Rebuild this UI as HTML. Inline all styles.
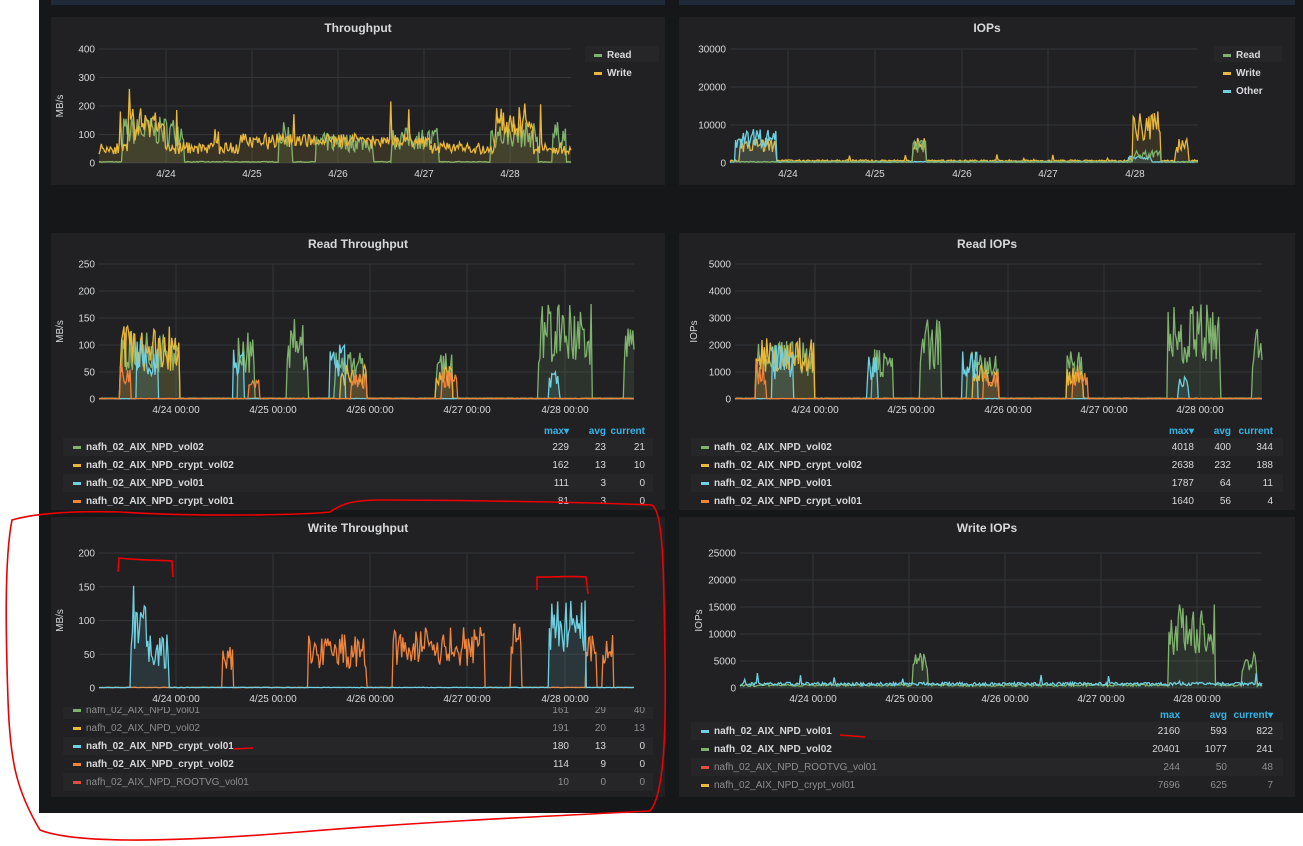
<!DOCTYPE html>
<html><head><meta charset="utf-8">
<style>
html,body{margin:0;padding:0;background:#fff;width:1303px;height:846px;overflow:hidden;font-family:"Liberation Sans",sans-serif}
#dash{position:absolute;left:39px;top:0;width:1264px;height:813px;background:#161719}
svg{position:absolute;left:0;top:0}
</style></head><body>
<div id="dash"></div>
<svg id="s" width="1303" height="846" style="z-index:2"></svg>
<script>
var S='';
function R(s){return function(){s=(s*16807)%2147483647;return s/2147483647}}
function rect(x,y,w,h,c){S+='<rect x="'+x+'" y="'+y+'" width="'+w+'" height="'+h+'" fill="'+c+'"/>'}
function txt(x,y,t,c,sz,anchor,w,extra){S+='<text x="'+x+'" y="'+y+'" fill="'+c+'" font-size="'+sz+'" text-anchor="'+(anchor||'start')+'" font-weight="'+(w||'normal')+'" font-family="Liberation Sans, sans-serif" '+(extra||'')+'>'+t+'</text>'}
rect(51,0,614,5,'#1f2a38');rect(679,0,616,5,'#1f2a38');
function panel(x,y,w,h,title){rect(x,y,w,h,'#212124');txt(x+w/2,y+15,title,'#d8d9da',12,'middle','bold')}
function xlabels(y1,xt,xl){for(var j=0;j<xt.length;j++)txt(xt[j],y1+14,xl[j],'#d8d9da',10,'middle')}
function grid(x0,y0,x1,y1,ylabels,xt,xl,unit){
 var n=ylabels.length-1;
 for(var i=0;i<=n;i++){var y=y1-(y1-y0)*i/n;S+='<line x1="'+x0+'" x2="'+x1+'" y1="'+y+'" y2="'+y+'" stroke="#333538"/>';txt(x0-4,y+3.5,ylabels[i],'#d8d9da',10,'end')}
 for(var j=0;j<xt.length;j++){S+='<line x1="'+xt[j]+'" x2="'+xt[j]+'" y1="'+y0+'" y2="'+y1+'" stroke="#333538"/>'}
 xlabels(y1,xt,xl);
 txt(0,0,unit,'#d8d9da',10,'middle','normal','transform="translate('+(x0-38+(unit=='IOPs'?0:2))+','+((y0+y1)/2)+') rotate(-90)"');
}
function series(x0,y0,x1,y1,n,base,bursts,seed,col,fill,spk){
 var r=R(seed),pts=[];
 for(var i=0;i<n;i++){var t=i/(n-1),v=base*(0.6+0.8*r());
  for(var k=0;k<bursts.length;k++){var b=bursts[k];if(t>=b[0]&&t<=b[1])v+=b[2]*(0.35+0.65*r())}
  if(spk&&r()<spk)v+=base*3*r();
  v=Math.max(0,Math.min(1,v));pts.push([x0+(x1-x0)*t,y1-(y1-y0)*v])}
 var d='M'+pts.map(function(p){return p[0].toFixed(1)+','+p[1].toFixed(1)}).join('L');
 if(fill)S+='<path d="'+d+'L'+x1+','+y1+'L'+x0+','+y1+'Z" fill="'+col+'" fill-opacity="0.12"/>';
 S+='<path d="'+d+'" fill="none" stroke="'+col+'" stroke-width="1.3"/>';
}
var G='#7eb26d',Y='#eab839',C='#6ed0e0',O='#ef843c',RD='#e24d42';
function leg(x,y,c,t,dim){rect(x,y-4,8,3,c);txt(x+13,y,t,dim?'#8e8e8e':'#d8d9da',10,'start',dim?'normal':'bold')}
function table(px,pw,hy,rows,hdr,cols){
 txt(cols[0],hy,hdr[0],'#33b5e5',10,'end','bold');txt(cols[1],hy,hdr[1],'#33b5e5',10,'end','bold');txt(cols[2],hy,hdr[2],'#33b5e5',10,'end','bold');
 for(var i=0;i<rows.length;i++){var y=hy+16+i*18,r=rows[i];
  if(i%2==0)rect(px+12,y-12,pw-24,18,'#262628');
  leg(px+22,y,r[0],r[1],r[5]);
  var c=r[5]?'#8e8e8e':'#d8d9da';txt(cols[0],y,r[2],c,10,'end');txt(cols[1],y,r[3],c,10,'end');txt(cols[2],y,r[4],c,10,'end')}
}
var XL=['4/24 00:00','4/25 00:00','4/26 00:00','4/27 00:00','4/28 00:00'];
panel(51,17,614,168,'Throughput');
grid(99,49,571,163,['0','100','200','300','400'],[166,252,338,424,510],['4/24','4/25','4/26','4/27','4/28'],'MB/s');
series(99,49,571,163,420,0.01,[[0.05,0.18,0.4],[0.38,0.41,0.35],[0.46,0.58,0.25],[0.62,0.72,0.3],[0.83,0.93,0.35],[0.96,0.99,0.35]],7,G,true);
series(99,49,571,163,420,0.13,[[0.06,0.14,0.3],[0.3,0.7,0.1],[0.84,0.92,0.35]],11,Y,true,0.04);
rect(585,46,74,16,'#262628');leg(594,58,G,'Read');leg(594,76,Y,'Write');
panel(679,17,616,168,'IOPs');
grid(730,49,1198,163,['0','10000','20000','30000'],[788,875,962,1048,1135],['4/24','4/25','4/26','4/27','4/28'],'');
series(730,49,1198,163,420,0.02,[[0.02,0.1,0.2],[0.39,0.42,0.2],[0.86,0.92,0.45],[0.95,0.98,0.2]],5,Y,true,0.03);
series(730,49,1198,163,420,0.01,[[0.01,0.1,0.3],[0.85,0.9,0.05]],9,C,true);
series(730,49,1198,163,420,0.01,[[0.39,0.42,0.2],[0.86,0.92,0.1]],13,G,false);
rect(1214,46,68,16,'#262628');leg(1223,58,G,'Read');leg(1223,76,Y,'Write');leg(1223,94,C,'Other');
panel(51,233,614,277,'Read Throughput');
grid(99,264,634,399,['0','50','100','150','200','250'],[176,273,370,467,565],XL,'MB/s');
series(99,264,634,399,450,0.005,[[0.04,0.15,0.5],[0.26,0.29,0.5],[0.35,0.39,0.6],[0.44,0.5,0.35],[0.63,0.66,0.35],[0.82,0.92,0.7],[0.98,1,0.7]],3,G,true);
series(99,264,634,399,450,0.004,[[0.04,0.15,0.55],[0.45,0.5,0.25],[0.63,0.66,0.25]],17,Y,true);
series(99,264,634,399,450,0.003,[[0.07,0.11,0.45],[0.25,0.27,0.4],[0.43,0.46,0.4],[0.84,0.86,0.2]],19,C,true);
series(99,264,634,399,450,0.003,[[0.04,0.06,0.3],[0.28,0.3,0.15],[0.47,0.5,0.2],[0.64,0.67,0.2]],23,O,true);
table(51,614,434,[[G,'nafh_02_AIX_NPD_vol02','229','23','21'],[Y,'nafh_02_AIX_NPD_crypt_vol02','162','13','10'],[C,'nafh_02_AIX_NPD_vol01','111','3','0'],[O,'nafh_02_AIX_NPD_crypt_vol01','81','3','0']],['max▾','avg','current'],[569,606,645]);
panel(679,233,616,277,'Read IOPs');
grid(735,264,1262,399,['0','1000','2000','3000','4000','5000'],[815,911,1008,1104,1200],XL,'IOPs');
series(735,264,1262,399,450,0.005,[[0.04,0.15,0.45],[0.26,0.3,0.4],[0.35,0.39,0.6],[0.44,0.5,0.35],[0.63,0.66,0.35],[0.82,0.92,0.7],[0.98,1,0.6]],31,G,true);
series(735,264,1262,399,450,0.004,[[0.04,0.15,0.45],[0.45,0.5,0.25],[0.63,0.66,0.25]],37,Y,true);
series(735,264,1262,399,450,0.003,[[0.07,0.11,0.4],[0.25,0.27,0.35],[0.43,0.46,0.35],[0.84,0.86,0.2]],41,C,true);
series(735,264,1262,399,450,0.003,[[0.04,0.06,0.3],[0.47,0.5,0.2],[0.64,0.67,0.2]],43,O,true);
table(679,616,434,[[G,'nafh_02_AIX_NPD_vol02','4018','400','344'],[Y,'nafh_02_AIX_NPD_crypt_vol02','2638','232','188'],[C,'nafh_02_AIX_NPD_vol01','1787','64','11'],[O,'nafh_02_AIX_NPD_crypt_vol01','1640','56','4']],['max▾','avg','current'],[1194,1231,1273]);
// Write Throughput
panel(51,517,614,280,'Write Throughput');
table(51,614,697,[[G,'nafh_02_AIX_NPD_vol01','161','29','40',1],[Y,'nafh_02_AIX_NPD_vol02','191','20','13',1],[C,'nafh_02_AIX_NPD_crypt_vol01','180','13','0'],[O,'nafh_02_AIX_NPD_crypt_vol02','114','9','0'],[RD,'nafh_02_AIX_NPD_ROOTVG_vol01','10','0','0',1]],['','',''],[569,606,645]);
rect(51,545,614,162,'#212124');
grid(99,553,634,688,['0','50','100','150','200'],[176,273,370,467,565],XL,'MB/s');
series(99,553,634,688,450,0.004,[[0.23,0.25,0.3],[0.39,0.5,0.4],[0.55,0.72,0.45],[0.77,0.79,0.5],[0.91,0.93,0.4],[0.94,0.96,0.4]],47,O,false);
series(99,553,634,688,450,0.004,[[0.06,0.09,0.8],[0.09,0.13,0.4],[0.84,0.91,0.65]],53,C,true);
// Write IOPs
panel(679,517,616,280,'Write IOPs');
grid(740,553,1262,688,['0','5000','10000','15000','20000','25000'],[813,909,1005,1101,1197],XL,'IOPs');
series(740,553,1262,688,450,0.02,[[0.33,0.36,0.25],[0.82,0.91,0.6],[0.96,0.99,0.25]],59,G,true);
series(740,553,1262,688,450,0.03,[],61,C,false,0.02);
table(679,616,718,[[C,'nafh_02_AIX_NPD_vol01','2160','593','822'],[G,'nafh_02_AIX_NPD_vol02','20401','1077','241'],[RD,'nafh_02_AIX_NPD_ROOTVG_vol01','244','50','48',1],[Y,'nafh_02_AIX_NPD_crypt_vol01','7696','625','7',1]],['max','avg','current▾'],[1180,1227,1273]);
var red='fill="none" stroke="#e00" stroke-width="1.6"';
S+='<path '+red+' d="M118,572 L119,558 C135,560 155,560 172,561 L173,577"/>';
S+='<path '+red+' d="M537,590 L537,577 C555,577 570,576 586,577 L588,594"/>';
S+='<path '+red+' d="M233,749 L253,748"/>';
S+='<path '+red+' d="M840,735 L865,737"/>';
S+='<path '+red+' d="M330,512 C300,515 200,517 120,512 C80,511 40,512 12,520 C4,560 6,640 8,700 C10,760 16,790 40,830 C80,846 200,840 300,832 C420,822 550,816 650,811 C668,790 666,700 664,600 C663,540 660,510 652,505 C580,502 450,500 380,500 C350,500 340,505 330,512 Z"/>';
document.getElementById('s').innerHTML=S;
</script>
</body></html>
